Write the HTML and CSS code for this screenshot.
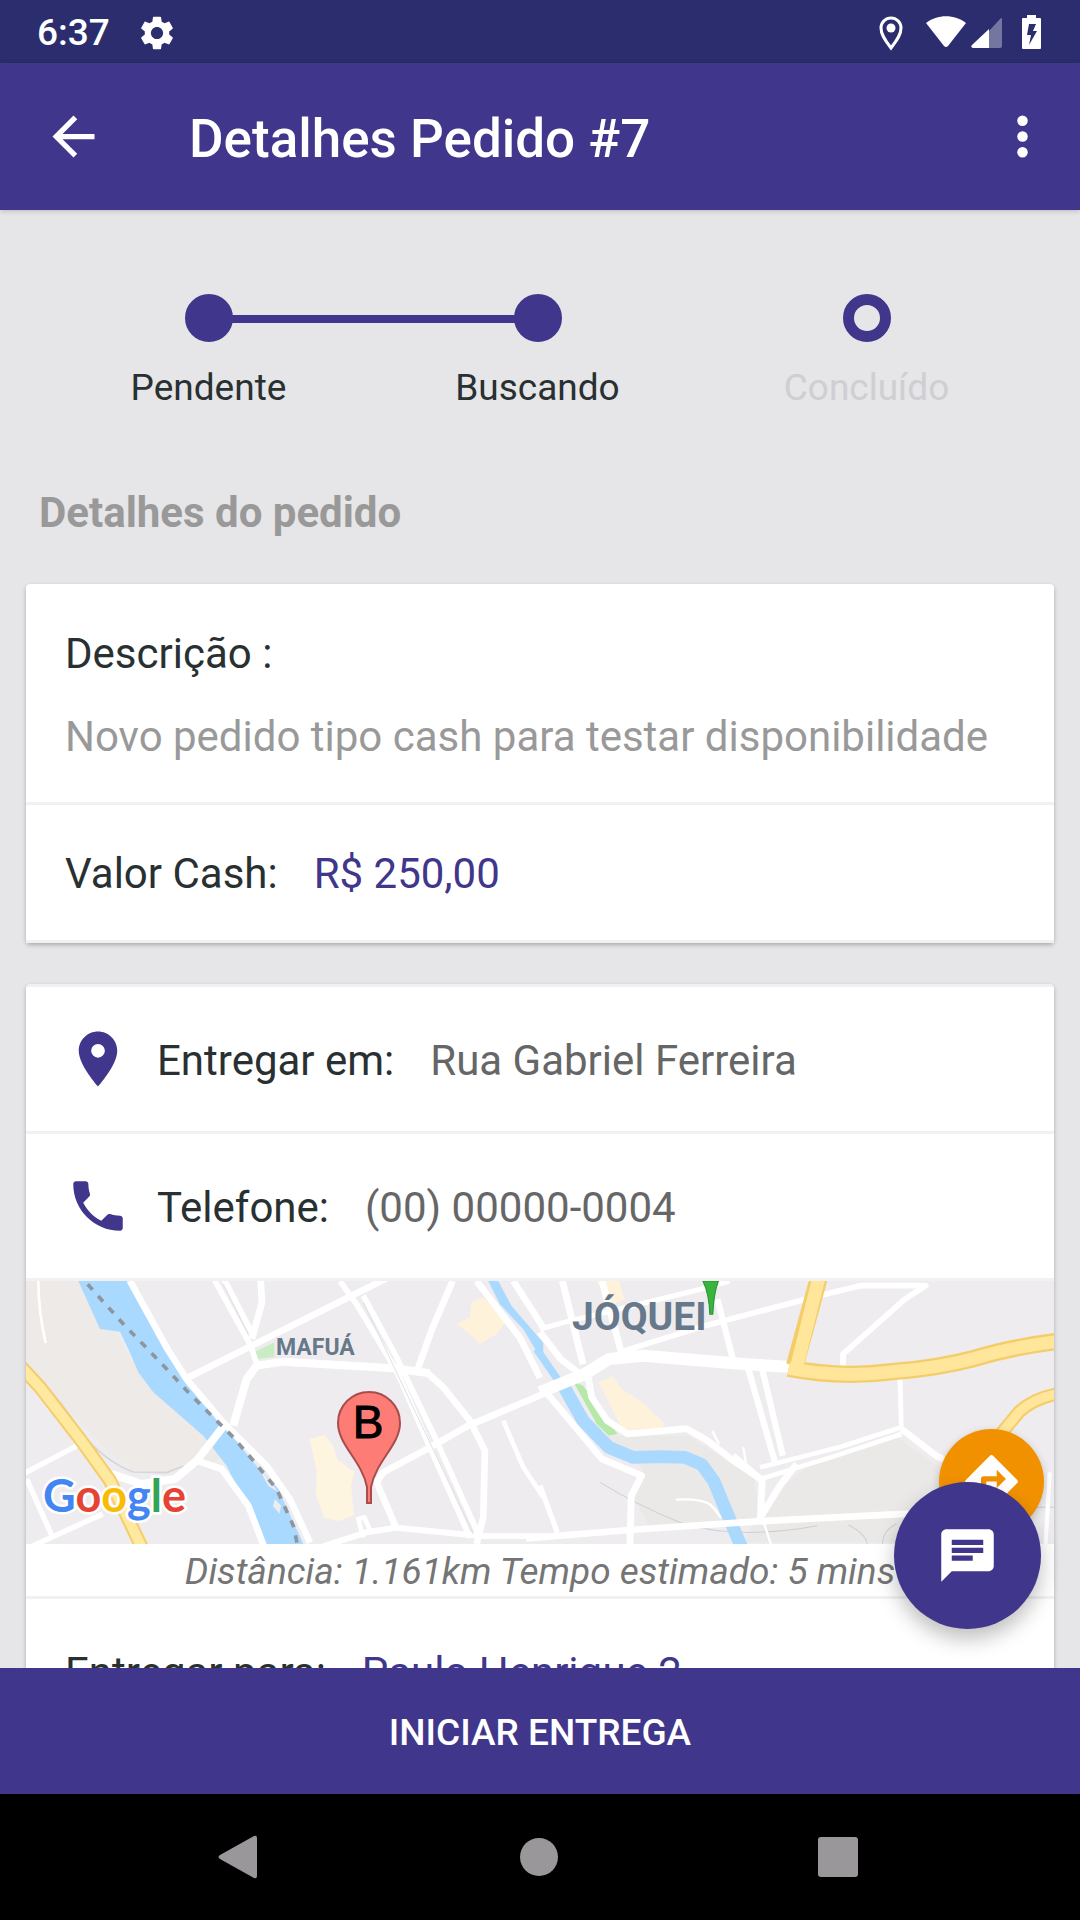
FILE: index.html
```html
<!DOCTYPE html>
<html lang="pt-BR">
<head>
    <meta charset="UTF-8">
    <meta name="viewport" content="width=device-width, initial-scale=1.0">
    <title>Detalhes Pedido #7</title>
    <link rel="stylesheet" href="styles.css">
</head>
<body>

    <div class="status-bar">
        <span class="clock">6:37</span>
        <svg class="status-gear" viewBox="2 2 20 20"><path fill="#fff" d="M19.14 12.94c.04-.3.06-.61.06-.94 0-.32-.02-.64-.07-.94l2.03-1.58c.18-.14.23-.41.12-.61l-1.92-3.32c-.12-.22-.37-.29-.59-.22l-2.39.96c-.5-.38-1.03-.7-1.62-.94l-.36-2.54c-.04-.24-.24-.41-.48-.41h-3.84c-.24 0-.43.17-.47.41l-.36 2.54c-.59.24-1.13.57-1.62.94l-2.39-.96c-.22-.08-.47 0-.59.22L2.74 8.87c-.12.21-.08.47.12.61l2.03 1.58c-.05.3-.09.63-.09.94s.02.64.07.94l-2.03 1.58c-.18.14-.23.41-.12.61l1.92 3.32c.12.22.37.29.59.22l2.39-.96c.5.38 1.03.7 1.62.94l.36 2.54c.05.24.24.41.48.41h3.84c.24 0 .44-.17.47-.41l.36-2.54c.59-.24 1.13-.56 1.62-.94l2.39.96c.22.08.47 0 .59-.22l1.92-3.32c.12-.22.07-.47-.12-.61l-2.01-1.58zM12 15.6c-1.98 0-3.6-1.62-3.6-3.6s1.62-3.6 3.6-3.6 3.6 1.62 3.6 3.6-1.62 3.6-3.6 3.6z"/></svg>
        <svg class="status-icons" viewBox="0 0 166 36">
            <path fill="none" stroke="#fff" stroke-width="3" d="M13 33C6 24 3 19 3 13a10 10 0 0 1 20 0c0 6-3 11-10 20z"/>
            <circle cx="13" cy="13" r="4.500" fill="#fff"/>
            <path fill="#fff" d="M48 8C59-1 77-1 88 8L70 31q-2 2-4 0z"/>
            <path fill="#fff" fill-opacity=".35" d="M111 16l11-12q2-2 2 0v27q0 2-2 2h-11z"/>
            <path fill="#fff" d="M111 14v19H95q-3-1-1-3z"/>
            <path fill="#fff" fill-rule="evenodd" d="M149 0h9v3h4q1 0 1 1v29q0 1-1 1h-17q-1 0-1-1V4q0-1 1-1h4zM151 9l-2 11h4l-2 10 8-14h-4l3-7z"/>
        </svg>
    </div>

    <header class="app-bar">
        <button class="icon-button" aria-label="Voltar">
            <svg viewBox="0 0 24 24"><path fill="#fff" d="M20 11H7.830l5.590-5.590L12 4l-8 8 8 8 1.410-1.410L7.830 13H20z"/></svg>
        </button>
        <h1>Detalhes Pedido #7</h1>
        <button class="icon-button" aria-label="Mais opções">
            <svg viewBox="0 0 24 24"><g fill="#fff"><circle cx="12" cy="6" r="2"/><circle cx="12" cy="12" r="2"/><circle cx="12" cy="18" r="2"/></g></svg>
        </button>
    </header>

    <div class="content">
        <main class="scroll">
            <ol class="steps">
                <li class="step done">Pendente</li>
                <li class="step done linked">Buscando</li>
                <li class="step">Concluído</li>
            </ol>

            <h2>Detalhes do pedido</h2>

            <section class="card">
                <div class="description">
                    <p>Descrição :</p>
                    <p class="muted">Novo pedido tipo cash para testar disponibilidade</p>
                </div>
                <div class="row cash">
                    <span>Valor Cash:</span>
                    <span class="accent">R$ 250,00</span>
                </div>
            </section>

            <section class="card delivery">
                <div class="row">
                    <svg class="row-icon" viewBox="0 0 24 24"><path fill="#40368b" d="M12 2C8.130 2 5 5.130 5 9c0 5.250 7 13 7 13s7-7.750 7-13c0-3.870-3.130-7-7-7zm0 9.500a2.500 2.500 0 0 1 0-5 2.500 2.500 0 0 1 0 5z"/></svg>
                    <span>Entregar em:</span>
                    <span class="value">Rua Gabriel Ferreira</span>
                </div>
                <div class="row">
                    <svg class="row-icon" viewBox="0 0 24 24"><path fill="#40368b" d="M6.620 10.790c1.440 2.830 3.760 5.140 6.590 6.590l2.200-2.200c.27-.27.67-.36 1.020-.24 1.120.37 2.330.57 3.570.57.550 0 1 .45 1 1V20c0 .55-.45 1-1 1-9.390 0-17-7.610-17-17 0-.55.45-1 1-1h3.500c.55 0 1 .45 1 1 0 1.250.2 2.450.57 3.570.11.35.03.74-.25 1.020l-2.200 2.200z"/></svg>
                    <span>Telefone:</span>
                    <span class="value">(00) 00000-0004</span>
                </div>

                <div class="map">
                    <svg class="map-drawing" viewBox="0 0 1028 263" role="img" aria-label="Mapa da rota">
                        <rect width="1028" height="263" fill="#eeecef"/>

                        <!-- west side -->
                        <g transform="translate(-6 -12) scale(.3333)" fill="none" stroke-linejoin="round">
                            <path fill="#edeae7" d="M18 36H200L350 300 620 560 580 580 530 570 440 612 350 608 280 560 170 450 18 290z"/>
                            <path fill="#a9d9ff" d="M175 36L240 180 300 188 325 240 355 310 400 370 550 500 620 590 665 680 700 750 730 825H850L820 760 775 660 700 580 620 480 560 410 490 330 430 230 320 36z"/>
                            <path fill="#eeecef" d="M705 580l70 90-30-20zM765 690l18 20-4 24-20-22z"/>
                            <path fill="#fef5e0" d="M868 510l45-12 25 30 15 45 50 35-10 40 10 90-45 18-45-8-25-70 2-75z"/>
                            <path fill="#fef3da" d="M1310 165l40-20 5-45 35-15 70 70-30 40-50 30-30-30z"/>
                            <path fill="#c9ecc4" d="M705 248l58-28v44l-52 6z"/>
                            <path fill="#a9d9ff" d="M1405 36h30l40 75 95 110v60l-60-100-70-75z"/>

                            <g stroke="#fff" stroke-width="20">
                                <path stroke-width="8" d="M55 36q0 90 22 186"/>
                                <path d="M330 36l110 200 60 95 110 130 130 130 70 100 60 130"/>
                                <path d="M500 328l180-90 300-150 120-60"/>
                                <path stroke-width="17" d="M582 30l110 200 20 60M612 30l88 170"/>
                                <path d="M722 30l4 70-30 110"/>
                                <path stroke-width="24" d="M640 470l40-140 30-40 80-12 330 20 110 15"/>
                                <path d="M1220 310l50 45 80 100 45 90-5 200-20 80"/>
                                <path stroke-width="17" d="M960 36l50 70 120 200 100 230 120 270M1030 80l95 175 120 250 130 290"/>
                                <path d="M1298 36l-60 140-45 125"/>
                                <path d="M1570 375l-225 95-115 65-140 75-20 30 60 140"/>
                                <path d="M1370 36l130 170 60 120"/>
                                <path d="M1480 36l90 140"/>
                                <path d="M1450 455l60 140 60 90" stroke-width="14"/>
                                <path stroke-width="24" d="M620 460l-90 115-65 55-100 15-90-30"/>
                                <path d="M530 575l75 25 80 110 50 130"/>
                                <path d="M10 615l170-90M20 630l80 180M18 840l230-105" stroke-width="16"/>
                                <path d="M900 835l140-45 90-14 250 25 200 0" stroke-width="18"/>
                                <path d="M1030 805l-15-55 18-5 20 45" stroke-width="14"/>
                            </g>
                            <path stroke="#e0dee2" stroke-width="3" d="M1030 100L1360 795M610 46l75 150"/>
                            <path stroke="#d4d7d9" stroke-width="5" d="M80 355q50 50 100 130 70 90 160 124l100 2 50-20"/>
                            <path stroke="#8f959c" stroke-width="11" stroke-dasharray="22 25" d="M203 46L310 165 375 232 440 300 505 370 575 440 640 505 700 575 770 660 820 770 832 825"/>

                            <path stroke="#f4cd6a" stroke-width="42" d="M0 290l60 65 120 155 90 125 100 210"/>
                            <path stroke="#ffe99f" stroke-width="30" d="M0 290l60 65 120 155 90 125 100 210"/>
                        </g>

                        <!-- east side -->
                        <g transform="translate(514 -12) scale(.3444 .3333)" fill="none" stroke-linejoin="round">
                            <path fill="#ebe9e7" d="M170 500l260 0 190 120 20 140-320 20-50-100 30-80-70-60zM660 690l120-100 250-90 180 130v190H590z"/>
                            <path fill="#fef3da" d="M170 340l40-18 30 40 60 40 60 60-5 15-110 15zM165 36h65l15 55-40 20z"/>
                            <path fill="#b6e8a8" d="M95 335l30 15 100 145-25 5-35-35z"/>
                            <path stroke="#a9d9ff" stroke-width="22" d="M-10 240l60 90"/>
                            <path stroke="#a9d9ff" stroke-width="38" d="M65 345l60 110 75 80 70 30 80-2 70 2 50 22 35 50 40 100 45 110"/>
                            <path stroke="#ccd0d3" stroke-width="3" d="M175 640q100 65 230 120 160 55 400 10M895 768q50 25 55 57M995 825q0-40 40-60M1400 715h100"/>

                            <g stroke="#fff" stroke-width="20">
                                <path d="M65 36l60 250M180 36l55 210"/>
                                <path d="M0 180l70-20 400-100 80-24" stroke-width="15"/>
                                <path stroke-width="17" d="M230 250l250-80 330-90 120-30h190l-60 40-180 165v45"/>
                                <path d="M515 90l45 180" stroke-width="18"/>
                                <path stroke-width="36" d="M0 370l130-55 70-45 100-10 290 25 150 10"/>
                                <path d="M0 190l60 80 75 60"/>
                                <path d="M140 325l10 60 45 70 60 40 170-16 60 35 75 60 80 55"/>
                                <path d="M10 360l170 210 115 50-30 60-4 150"/>
                                <path d="M0 650l50 140" stroke-width="15"/>
                                <path stroke-width="18" d="M605 300l80 290M645 300l60 260"/>
                                <path stroke-width="14" d="M1045 310l4 165-180 60-230 60M1050 495l-190 65-220 70"/>
                                <path stroke-width="20" d="M1050 480l100 80 80 40"/>
                                <path d="M560 560l85 75-5 110 60-100 45-60"/>
                                <path stroke-width="7" d="M500 485l20 40M590 535l8 45M395 692q70-5 100 15 15 15 30 40M645 745l25 80"/>
                                <path d="M-40 808l300-25 360-25 450-24"/>
                                <path d="M1480 610l-12 215" stroke-width="12"/>
                            </g>

                            <g stroke="#f4cd6a" stroke-width="52">
                                <path d="M810 25l-70 265"/>
                                <path d="M722 298q150 30 300 10 130-10 240-40 110-35 250-52"/>
                                <path stroke-width="40" d="M1310 530l80-100q40-40 110-55"/>
                            </g>
                            <g stroke="#ffe69a" stroke-width="38">
                                <path d="M810 25l-64 265"/>
                                <path d="M722 298q150 30 300 10 130-10 240-40 110-35 250-52"/>
                                <path stroke-width="28" d="M1310 530l80-100q40-40 110-55"/>
                            </g>
                            <path fill="#37b53c" stroke="#2a9236" stroke-width="3" d="M473 36h45q-14 38-16 100h-9q-2-62-20-100z"/>
                        </g>

                        <text x="250" y="74" class="place place-small">MAFUÁ</text>
                        <text x="546" y="49" class="place place-large">JÓQUEI</text>

                        <path fill="#fe7c76" stroke="#a84d4b" stroke-width="2" d="M312 142a31 31 0 0 1 62 0c0 22-24 38-29 64v16h-4v-16c-5-26-29-42-29-64z"/>
                        <text x="342" y="157" class="pin-letter">B</text>

                        <text x="17" y="231" class="google"><tspan fill="#4485f4">G</tspan><tspan fill="#e74335">o</tspan><tspan fill="#fabb05">o</tspan><tspan fill="#4485f4">g</tspan><tspan fill="#34a353">l</tspan><tspan fill="#e74335">e</tspan></text>
                    </svg>
                    <button class="directions" aria-label="Rotas">
                        <svg viewBox="0 0 24 24"><path fill="#fff" d="M21.710 11.290l-9-9a1 1 0 0 0-1.410 0l-9 9a1 1 0 0 0 0 1.410l9 9a1 1 0 0 0 1.410 0l9-9a1 1 0 0 0 0-1.410zM14 14.500V12h-4v3H8v-4c0-.55.45-1 1-1h5V7.500l3.500 3.500-3.500 3.500z"/></svg>
                    </button>
                </div>
                <p class="distance">Distância: 1.161km Tempo estimado: 5 mins</p>

                <div class="row">
                    <span>Entregar para:</span>
                    <span class="accent">Paulo Henrique 2</span>
                </div>
            </section>
        </main>

        <button class="chat" aria-label="Conversa">
            <svg viewBox="0 0 24 24"><path fill="#fff" d="M20 2H4c-1.100 0-2 .9-2 2v18l4-4h14c1.100 0 2-.9 2-2V4c0-1.100-.9-2-2-2zM6 6h12v2H6zm8 8H6v-2h8zm4-3H6V9h12z"/></svg>
        </button>
    </div>

    <button class="start">INICIAR ENTREGA</button>

    <nav class="nav-bar">
        <button aria-label="Voltar"><svg viewBox="0 0 48 48"><path fill="#9a979a" d="M4 22L38 3q3-1 3 2v38q0 3-3 2L4 26q-3-2 0-4z"/></svg></button>
        <button aria-label="Início"><svg viewBox="0 0 48 48"><circle cx="24" cy="24" r="19" fill="#9a979a"/></svg></button>
        <button aria-label="Recentes"><svg viewBox="0 0 48 48"><rect x="4" y="4" width="40" height="40" rx="3" fill="#9a979a"/></svg></button>
    </nav>

</body>
</html>
```
FILE: styles.css
```css
*, *::before {
    box-sizing: border-box;
}
body {
    display: flex;
    flex-direction: column;
    height: 100vh;
    margin: 0;
    background-color: #e6e5e7;
    color: #293032;
    font: 42px/50px Roboto, sans-serif;
}
h1, h2, p, ol {
    margin: 0;
    padding: 0;
}
button {
    border: none;
    padding: 0;
    background: none;
    font-family: inherit;
    cursor: pointer;
}
svg {
    display: block;
}

/* top bars */
.status-bar {
    display: flex;
    align-items: center;
    flex: none;
    height: 63px;
    padding: 2px 36px 0 37px;
    background-color: #2b2d6e;
    color: #fff;
}
.clock {
    font-size: 37px;
    font-weight: 500;
}
.status-gear {
    width: 34px;
    height: 34px;
    margin-left: 30px;
}
.status-icons {
    width: 166px;
    height: 36px;
    margin-left: auto;
}
.app-bar {
    display: flex;
    align-items: center;
    flex: none;
    height: 147px;
    padding: 0 26px 0 42px;
    background-color: #40368b;
    color: #fff;
    box-shadow: 0 1px 5px rgba(0, 0, 0, 0.2);
    z-index: 1;
}
.app-bar h1 {
    flex: 1;
    margin-left: 84px;
    padding-top: 4px;
    font-size: 53px;
    font-weight: 500;
    line-height: 60px;
}
.icon-button svg {
    width: 63px;
    height: 63px;
}

/* scrolling content */
.content {
    position: relative;
    flex: 1;
    min-height: 0;
}
.scroll {
    height: 100%;
    overflow-y: auto;
    scrollbar-width: none;
    padding: 84px 26px 0;
}
.steps {
    display: flex;
    list-style: none;
    padding: 0 23px 0 18px;
}
.step {
    position: relative;
    flex: 1;
    color: #cfced2;
    font-size: 37px;
    line-height: 44px;
    text-align: center;
}
.step::before {
    content: "";
    display: block;
    width: 48px;
    height: 48px;
    margin: 0 auto 24px;
    border: 11px solid #40368b;
    border-radius: 50%;
}
.step.done {
    color: #293032;
}
.step.done::before {
    background-color: #40368b;
}
.step.linked::after {
    content: "";
    position: absolute;
    top: 21px;
    right: 50%;
    width: 100%;
    height: 8px;
    background-color: #40368b;
}
h2 {
    margin: 78px 0 46px 13px;
    color: #999;
    font-size: 42px;
    font-weight: 700;
    line-height: 50px;
}

.card {
    margin-bottom: 41px;
    border-radius: 4px;
    background-color: #fff;
    box-shadow: 0 2px 4px rgba(0, 0, 0, 0.25);
}
.delivery {
    border-top: 3px solid #f1f0f3;
}
.description {
    display: flex;
    flex-direction: column;
    gap: 33px;
    padding: 45px 39px 40px;
    border-bottom: 3px solid #f1f0f3;
}
.row {
    display: flex;
    align-items: center;
    gap: 36px;
    height: 147px;
    padding: 0 39px;
    border-bottom: 3px solid #f1f0f3;
}
.row span {
    padding-top: 3px;
}
.row.cash {
    height: 138px;
}
.row-icon {
    width: 66px;
    height: 66px;
    margin-right: -10px;
}
.muted {
    color: #999;
}
.value {
    color: #666;
}
.accent {
    color: #40368b;
}

/* map */
.map {
    position: relative;
}
.map-drawing {
    width: 100%;
}
.place {
    fill: #67788a;
    font-weight: 700;
}
.place-small {
    font-size: 23px;
}
.place-large {
    font-size: 39px;
}
.pin-letter {
    font: 46px "Liberation Sans", sans-serif;
    stroke: #000;
    stroke-width: 1px;
    text-anchor: middle;
}
.google {
    font: 700 45px Lato, sans-serif;
    stroke: #fff;
    stroke-width: 5px;
    paint-order: stroke;
}
.directions {
    position: absolute;
    right: 10px;
    bottom: 10px;
    width: 105px;
    height: 105px;
    border-radius: 50%;
    background-color: #f29100;
    box-shadow: 0 3px 8px rgba(0, 0, 0, 0.2);
}
.directions svg {
    width: 63px;
    height: 63px;
    margin: auto;
}
.distance {
    padding: 5px 0 1px;
    border-bottom: 3px solid #f1f0f3;
    color: #757575;
    font-size: 37px;
    font-style: italic;
    line-height: 46px;
    text-align: center;
}

.chat {
    position: absolute;
    right: 39px;
    bottom: 39px;
    width: 147px;
    height: 147px;
    border-radius: 50%;
    background-color: #40368b;
    box-shadow: 0 10px 20px rgba(0, 0, 0, 0.25);
}
.chat svg {
    width: 63px;
    height: 63px;
    margin: auto;
}

/* bottom bars */
.start {
    flex: none;
    height: 126px;
    padding-top: 2px;
    background-color: #40368b;
    color: #fff;
    font-size: 37px;
    font-weight: 500;
}
.nav-bar {
    display: flex;
    justify-content: space-between;
    align-items: center;
    flex: none;
    height: 126px;
    padding: 0 218px 0 216px;
    background-color: #000;
}
.nav-bar svg {
    width: 48px;
    height: 48px;
}
```
